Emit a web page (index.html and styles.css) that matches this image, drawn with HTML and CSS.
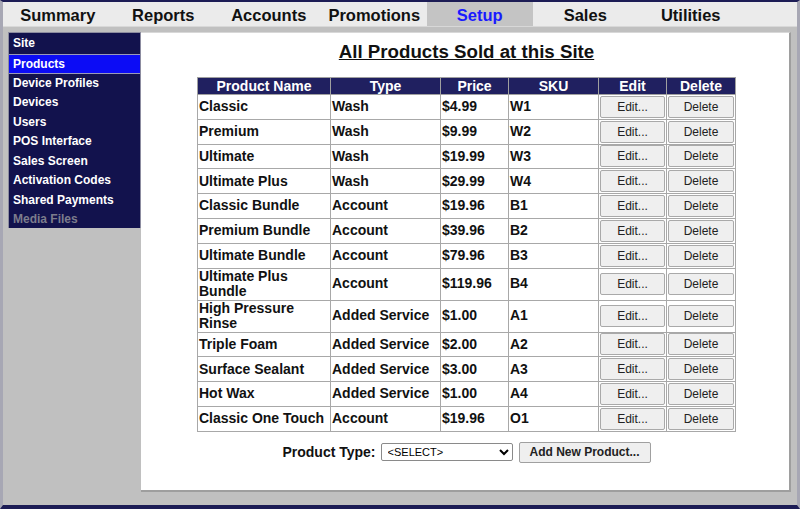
FILE: index.html
```html
<!DOCTYPE html>
<html lang="en">
<head>
    <meta charset="UTF-8">
    <meta name="viewport" content="width=device-width, initial-scale=1.0">
    <title>Setup - Products</title>
    <link rel="stylesheet" href="styles.css">
</head>
<body>
    <!-- Top tabs -->
    <div class="tabs">
        <div class="tab">Summary</div>
        <div class="tab">Reports</div>
        <div class="tab">Accounts</div>
        <div class="tab">Promotions</div>
        <div class="tab active">Setup</div>
        <div class="tab">Sales</div>
        <div class="tab">Utilities</div>
    </div>

    <div class="main">
        <!-- Setup menu -->
        <div class="side-menu">
            <div class="menu-item">Site</div>
            <div class="menu-item selected">Products</div>
            <div class="menu-item">Device Profiles</div>
            <div class="menu-item">Devices</div>
            <div class="menu-item">Users</div>
            <div class="menu-item">POS Interface</div>
            <div class="menu-item">Sales Screen</div>
            <div class="menu-item">Activation Codes</div>
            <div class="menu-item">Shared Payments</div>
            <div class="menu-item disabled">Media Files</div>
        </div>

        <div class="content">
            <h2>All Products Sold at this Site</h2>
            <table class="products">
                <colgroup>
                    <col style="width:133px">
                    <col style="width:110px">
                    <col style="width:68px">
                    <col style="width:90px">
                    <col style="width:68px">
                    <col style="width:69px">
                </colgroup>
                <tr>
                    <th>Product Name</th><th>Type</th><th>Price</th><th>SKU</th><th>Edit</th><th>Delete</th>
                </tr>
                <tr><td>Classic</td><td>Wash</td><td>$4.99</td><td>W1</td><td><button>Edit...</button></td><td><button>Delete</button></td></tr>
                <tr><td>Premium</td><td>Wash</td><td>$9.99</td><td>W2</td><td><button>Edit...</button></td><td><button>Delete</button></td></tr>
                <tr><td>Ultimate</td><td>Wash</td><td>$19.99</td><td>W3</td><td><button>Edit...</button></td><td><button>Delete</button></td></tr>
                <tr><td>Ultimate Plus</td><td>Wash</td><td>$29.99</td><td>W4</td><td><button>Edit...</button></td><td><button>Delete</button></td></tr>
                <tr><td>Classic Bundle</td><td>Account</td><td>$19.96</td><td>B1</td><td><button>Edit...</button></td><td><button>Delete</button></td></tr>
                <tr><td>Premium Bundle</td><td>Account</td><td>$39.96</td><td>B2</td><td><button>Edit...</button></td><td><button>Delete</button></td></tr>
                <tr><td>Ultimate Bundle</td><td>Account</td><td>$79.96</td><td>B3</td><td><button>Edit...</button></td><td><button>Delete</button></td></tr>
                <tr><td>Ultimate Plus Bundle</td><td>Account</td><td>$119.96</td><td>B4</td><td><button>Edit...</button></td><td><button>Delete</button></td></tr>
                <tr><td>High Pressure Rinse</td><td>Added Service</td><td>$1.00</td><td>A1</td><td><button>Edit...</button></td><td><button>Delete</button></td></tr>
                <tr><td>Triple Foam</td><td>Added Service</td><td>$2.00</td><td>A2</td><td><button>Edit...</button></td><td><button>Delete</button></td></tr>
                <tr><td>Surface Sealant</td><td>Added Service</td><td>$3.00</td><td>A3</td><td><button>Edit...</button></td><td><button>Delete</button></td></tr>
                <tr><td>Hot Wax</td><td>Added Service</td><td>$1.00</td><td>A4</td><td><button>Edit...</button></td><td><button>Delete</button></td></tr>
                <tr><td>Classic One Touch</td><td>Account</td><td>$19.96</td><td>O1</td><td><button>Edit...</button></td><td><button>Delete</button></td></tr>
            </table>

            <div class="add-row">
                <label for="product-type">Product Type:</label>
                <select id="product-type">
                    <option>&lt;SELECT&gt;</option>
                </select>
                <button class="add-btn">Add New Product...</button>
            </div>
        </div>
    </div>
</body>
</html>
```

FILE: styles.css
```css
body {
    margin: 0;
    height: 509px;
    box-sizing: border-box;
    background-color: #c0c0c0;
    border-top: 2px solid #1c1c55;
    border-bottom: 4px solid #1c1c55;
    border-left: 3px solid #a7a7b4;
    border-right: 3px solid #a7a7b4;
    font-family: "Liberation Sans", Arial, sans-serif;
    overflow: hidden;
}

.tabs {
    display: flex;
    height: 25px;
    padding-left: 2px;
    background-color: #ebebeb;
    border-bottom: 1px solid #d8d8d8;
    box-sizing: border-box;
}

.tab {
    width: 105.5px;
    text-align: center;
    font-size: 16.5px;
    font-weight: bold;
    line-height: 26px;
    color: #111;
}

.tab.active {
    background-color: #c4c4c4;
    color: #1a1aff;
}

.main {
    display: flex;
    padding: 5px 6px 13px 5px;
    height: 478px;
    box-sizing: border-box;
}

.side-menu {
    width: 133px;
    align-self: flex-start;
    background-color: #12124d;
    padding: 1px 0 0 0;
    border: 1px solid #8c8ca0;
    border-bottom: none;
    box-sizing: border-box;
}

.menu-item {
    height: 19.5px;
    line-height: 19.5px;
    padding-left: 4px;
    font-size: 12px;
    font-weight: bold;
    color: white;
}

.menu-item.selected {
    background-color: #0c0cf5;
    border-top: 1px solid #9a9ab8;
    border-bottom: 1px solid #9a9ab8;
    height: 18px;
    line-height: 18px;
}

.menu-item.disabled {
    color: #7c7c8c;
    height: 18px;
    line-height: 19px;
}

.content {
    flex: 1;
    background-color: white;
    border-right: 2px solid #9e9e9e;
    border-bottom: 2px solid #9e9e9e;
    border-top: 1px solid #d8d8d8;
    padding-left: 3px;
    text-align: center;
}

h2 {
    margin: 8px 0 14px 0;
    font-size: 18.7px;
    text-decoration: underline;
    color: #111;
}

.products {
    margin: 0 auto;
    width: 538px;
    table-layout: fixed;
    border-collapse: collapse;
    border: 1px solid #a0a0a0;
    text-align: left;
}

.products th {
    background-color: #202060;
    color: white;
    font-size: 14px;
    line-height: 16px;
    text-align: center;
    padding: 0;
    border: 1px solid #a0a0a0;
}

.products td {
    font-size: 14px;
    font-weight: bold;
    line-height: 15.5px;
    color: #111;
    padding: 0 1px;
    height: 23.8px;
    border: 1px solid #a8a8a8;
}

.products td button {
    width: 100%;
    height: 22px;
    display: block;
    font-family: "Liberation Sans", Arial, sans-serif;
    font-size: 12px;
    color: #222;
    background-color: #efefef;
    border: 1px solid #a9a9a9;
    border-radius: 2px;
    padding: 0;
}

.add-row {
    margin-top: 10px;
    display: flex;
    justify-content: center;
    align-items: center;
    gap: 5px;
}

label {
    font-size: 14px;
    font-weight: bold;
    color: #111;
}

select {
    width: 132px;
    height: 18px;
    font-family: "Liberation Sans", Arial, sans-serif;
    font-size: 11px;
    padding: 0 0 0 2px;
    border: 1px solid #8a8a8a;
    border-radius: 2px;
    background-color: white;
}

.add-btn {
    width: 132px;
    height: 21px;
    margin-left: 1px;
    font-family: "Liberation Sans", Arial, sans-serif;
    font-size: 12px;
    font-weight: bold;
    color: #222;
    background-color: #efefef;
    border: 1px solid #a0a0a0;
    border-radius: 2px;
    padding: 0;
}
```
